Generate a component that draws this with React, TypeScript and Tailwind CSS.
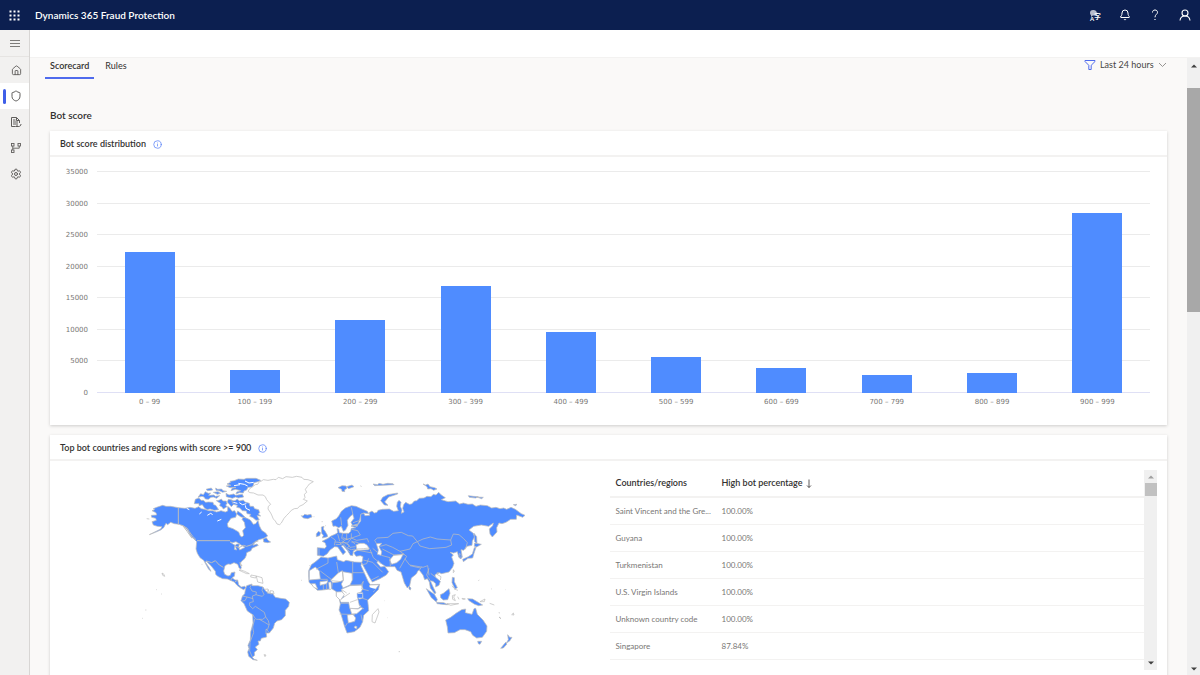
import React, { useState } from 'react';
import { Bell, House, Info, Settings, Shield } from 'lucide-react';

const distribution = [
  { range: '0 – 99', count: 22170 },
  { range: '100 – 199', count: 3560 },
  { range: '200 – 299', count: 11560 },
  { range: '300 – 399', count: 16870 },
  { range: '400 – 499', count: 9660 },
  { range: '500 – 599', count: 5620 },
  { range: '600 – 699', count: 3960 },
  { range: '700 – 799', count: 2850 },
  { range: '800 – 899', count: 3090 },
  { range: '900 – 999', count: 28430 },
];

const ticks = [35000, 30000, 25000, 20000, 15000, 10000, 5000, 0];

const countries = [
  { name: 'Saint Vincent and the Gre...', percentage: '100.00%' },
  { name: 'Guyana', percentage: '100.00%' },
  { name: 'Turkmenistan', percentage: '100.00%' },
  { name: 'U.S. Virgin Islands', percentage: '100.00%' },
  { name: 'Unknown country code', percentage: '100.00%' },
  { name: 'Singapore', percentage: '87.84%' },
  { name: 'Mozambique', percentage: '78.00%' },
];

const WaffleIcon = () => (
  <svg viewBox="0 0 11 11" className="size-[11px]" fill="currentColor">
    {[0, 4, 8].map((y) => [0, 4, 8].map((x) => <rect key={`${x}-${y}`} x={x + 0.5} y={y + 0.5} width="2" height="2" />))}
  </svg>
);

const MenuIcon = () => (
  <svg viewBox="0 0 12 10" className="h-[10px] w-3" fill="none" stroke="currentColor" strokeWidth="0.8">
    <path d="M1 2.500h10M1 5.500h10M1 8.500h10" />
  </svg>
);

const ReportIcon = () => (
  <svg viewBox="0 0 12 12" className="size-3" fill="none" stroke="currentColor" strokeWidth="1">
    <path d="M5.500 10.500H1.500V1.500H6.500L9.500 4.500V7M6.500 1.500V4.500H9.500M3 4h2.500M3 6h5M3 8h5M5.500 10.500h3c1.500 0 2.500-1 2.500-2.500M6.500 9.500l2 1" />
  </svg>
);

const FlowIcon = () => (
  <svg viewBox="0 0 12 12" className="size-3" fill="none" stroke="currentColor" strokeWidth="0.9">
    <rect x="1.500" y="1.500" width="2.500" height="2.500" />
    <rect x="8" y="1.500" width="2.500" height="2.500" />
    <rect x="1.500" y="8" width="2.500" height="2.500" />
    <path d="M2.750 4v4M9.250 4v2.200H2.750" />
  </svg>
);

const FilterIcon = () => (
  <svg viewBox="0 0 12 12" className="size-3" fill="none" stroke="currentColor" strokeWidth="1">
    <path d="M1 1.500h10v1L7.200 6.300V10.500H4.800V6.300L1 2.500z" />
  </svg>
);

const LanguageIcon = () => (
  <svg viewBox="0 0 12 12" className="size-3" fill="currentColor">
    <path d="M4 1a3 3 0 0 0-3 3c0 1 .4 1.700 1 2.200V8l1.800-1.500H8V4.500A3.500 3.500 0 0 0 4 1z" opacity="0.7" />
    <text x="1" y="11.500" fontSize="6" fontWeight="700">A</text>
    <text x="5.300" y="10" fontSize="6.500" fontWeight="700" fontFamily="Noto Sans CJK SC">字</text>
  </svg>
);

const PersonIcon = () => (
  <svg viewBox="0 0 12 12" className="size-3" fill="none" stroke="currentColor" strokeWidth="1.100">
    <circle cx="6" cy="4" r="3" />
    <path d="M1 11.500c.3-2.800 2.500-4.500 5-4.500s4.700 1.700 5 4.500" />
  </svg>
);

const HelpIcon = () => (
  <svg viewBox="0 0 12 12" className="size-3" fill="none" stroke="currentColor" strokeWidth="1">
    <path d="M3.500 3.500C3.500 1.800 4.500 1 6 1s2.500.9 2.500 2.300C8.500 5.300 6 5.500 6 8.300" />
    <path d="M5.400 10.500h1.200" strokeWidth="1.200" />
  </svg>
);

const ChevronIcon = () => (
  <svg viewBox="0 0 9 6" className="h-1.5 w-[9px]" fill="none" stroke="currentColor" strokeWidth="0.900">
    <path d="M1 1l3.500 3.500L8 1" />
  </svg>
);

const SortDownIcon = () => (
  <svg viewBox="0 0 6 9" className="ml-[3px] inline h-[9px] w-1.5" fill="none" stroke="currentColor" strokeWidth="0.800">
    <path d="M3 0.500v8M1 6.500l2 2 2-2" />
  </svg>
);

const Arrow = ({ down = false, className = 'text-[#404040]' }: { down?: boolean; className?: string }) => (
  <svg viewBox="0 0 6 4" className={`h-1 w-1.5 ${className}`} fill="currentColor">
    <path d={down ? 'M0 0.500h6L3 3.500z' : 'M0 3.500h6L3 0.500z'} />
  </svg>
);

const WorldMap = () => (
  <svg viewBox="0 0 1230 600" className="w-[410px]" fill="#4f8cff" stroke="#bdbdbd" strokeWidth="2.200" strokeLinejoin="round" role="img" aria-label="Map of countries with high bot scores">
    {/* North America */}
    <path d="M66 137L74 134 70 131 80 127 98 121 108 124 122 124 145 128 165 130 180 127 195 130 206 125 214 131 224 133 236 137 248 137 260 141 273 137 286 141 293 138 293 124 300 130 306 139 314 137 320 147 317 157 303 160 292 176 294 186 309 191 326 201 331 213 336 216 341 211 338 197 346 188 343 172 336 163 340 156 351 160 361 165 370 178 377 176 384 166 388 182 395 196 407 204 413 213 402 220 386 224 374 233 369 241 381 237 385 241 366 250 363 257 350 263 349 271 345 280 334 290 330 297 334 307 332 313 327 308 323 298 312 293 302 298 294 297 285 302 281 318 284 328 294 333 301 331 304 323 315 321 313 334 306 338 315 345 323 345 326 359 334 366 344 364 348 368 341 374 333 370 321 361 313 351 301 346 292 342 278 341 263 334 257 328 256 319 243 302 229 289 226 291 238 309 243 319 236 313 221 286 210 278 202 265 198 252 200 230 192 222 182 212 172 194 160 183 147 178 133 176 122 172 113 179 108 175 101 188 92 195 76 202 58 209 92 192 96 185 82 184 70 180 66 170 79 166 77 160 65 157 64 151 80 150 78 143z" />
    <path d="M193 116L196 103 207 99 213 106 220 106 227 112 235 111 249 112 251 119 257 121 266 134 253 136 240 132 232 134 224 130 217 119 207 122 207 116z" />
    <path d="M204 97L212 86 220 89 226 80 235 85 242 84 236 91 252 90 256 94 269 92 260 100 250 96 243 97 235 103 226 102 222 96 216 94zM257 69l6 4 12-1 4 5 11 2-12 3-8-4-12-2zM228 73l16-4 4 6-15 2zM259 107l8-1 7-4 5 6 10 0 2 8-4 4 4 5-11 7-4-6-7-4 2-7zM288 85l9 5 14-3 6 4 20-3 4 8-16 3-8-3-10 4-18-5zM295 103l12 2 5 12-8 8-5-6-7-8zM250 82l14-2 8 5-10 3z" />
    <path d="M291 57L302 52 300 49 312 47 325 42 342 43 350 40 378 40 392 46 384 50 372 53 370 61 366 66 354 67 350 75 342 78 340 84 328 83 318 87 320 81 332 77 316 73 303 77 306 70 318 67 300 68 289 63 303 61zM305 107L315 107 322 102 328 108 340 105 345 111 358 115 360 124 370 124 374 131 386 134 389 143 385 147 392 153 381 152 388 164 378 166 369 158 359 154 362 148 351 146 349 138 337 137 329 129 320 127 322 121 310 118zM323 138l10 7 14 13-14-2-13-9zM400 222l9-4 5 8 8 5-9 2-12-2z" />
    <path d="M325 55l18 3 10 5M312 62l18-3M345 48l12 6 14-2M328 113l9 6 12-3M346 121l2 9 12 6M310 112l12 3M170 130l8 4M232 151l10-6 6 4M215 141l-7 6M262 168l12-5" fill="none" stroke="white" strokeWidth="3" />
    <g fill="white">
      <path d="M354 79L360 70 367 66 376 59 383 58 388 50 393 49 400 44 414 46 430 43 438 44 445 37 458 41 468 35 487 37 500 34 516 37 521 43 534 44 550 50 538 57 532 65 526 73 530 82 523 88 525 98 520 103 532 108 519 119 508 124 503 130 493 131 484 136 478 143 470 151 462 160 454 174 449 179 441 177 436 168 430 162 425 150 422 144 414 132 415 124 422 118 415 110 410 104 406 95 399 90 384 90 371 84 360 83z" />
      <path d="M300 231l8 2 10-3 11 7-9 0-4 4-6-3zM315 241l5 14-7-2zM328 237l17 10-16 8-3-9zM330 292l6 11-4-3z" />
      <path d="M327 315l8 1 9 3 14 7-8 0-9-4-7-3zM363 330l16 3-2 6-15-3zM379 333l17 5 3 17-16-4zM350 368l2-4 1 7zM404 373l10-1 4 11-10 3-6-7zM421 377l9 1 2 9-11-1zM96 324l6 4 2 6-6-3zM402 569l6 1-3 5z" />
    </g>
    <path d="M145 128V178M201 227H300M229 288L245 293 256 287 268 300 280 307M318 244L327 248 340 241 350 244 365 239 377 229 385 228M155 180L165 186 172 190 178 200 187 213 198 224M160 184l12 16 14 20M307 338L301 347M323 346L315 350" fill="none" strokeWidth="3" />
    <path d="M514 152L519 153 524 148 532 150 543 148 546 156 533 161 520 159z" />
    {/* South America */}
    <path d="M346 374L350 362 366 357 366 362 384 362 399 366 405 376 415 385 428 386 436 397 452 400 467 402 478 412 476 424 466 436 466 452 455 464 441 468 434 475 430 489 418 504 409 504 410 516 394 520 391 528 384 528 387 538 376 546 382 554 373 562 374 571 367 577 373 583 382 586 369 584 356 574 353 561 357 551 354 541 361 525 362 501 369 474 368 449 352 438 342 416 333 407 337 394 344 386z" />
    <path d="M365 358L360 367 366 378 379 381 378 389 367 393 370 410 359 413 359 422 368 431 376 424 388 432 403 442 407 456 398 463 380 463 376 461 368 448M399 366L396 376 402 388 397 394 384 391 378 389M337 393L351 396 369 401M351 396L345 407 336 408M374 462L368 486 371 503 360 532 359 558 367 576M388 463L404 472 417 480 413 493 408 493 408 507M414 374L412 386M428 384L422 389M408 492L419 504M407 456L415 467 418 480" fill="none" />
    <g transform="translate(510 0)">
      {/* Arctic islands and Britain */}
      <path d="M114 68l12-6 12 1 3 7-7 4 0 6-8-1-1-6zM140 65l16-5 6 5-16 6zM369 57l8 3 7-3 6 8 14 3 7 4-10 4-8-5-10 1-2-7zM505 92l15 2 15 1-8 4-19-2zM530 96l20 1-5 4zM219 57l14 2 4-4 12 3 14-3 16 1 3 3-58 3zM640 119l11-1-4 4zM182 63l2 1z" />
      <path d="M64 186L72 184 70 192 75 198 82 210 83 215 67 219 70 211 65 205zM49 207L55 199 62 203 59 212 49 215zM242 107L248 97 263 89 293 84 293 87 266 96 254 111 264 121 253 120z" />
      {/* Scandinavia */}
      <path d="M95 168L109 161 116 153 124 139 136 129 154 122 168 124 181 130 202 139 206 146 191 144 183 148 179 164 175 176 158 182 153 172 162 160 158 148 149 156 142 166 144 181 136 196 130 199 124 184 116 188 106 183 99 184z" />
      {/* Eurasia mainland */}
      <path d="M52 248L75 250 79 244 75 233 66 229 84 220 93 213 105 208 113 203 111 191 116 192 118 203 131 205 146 205 152 199 154 190 167 188 153 183 175 178 182 168 182 148 191 145 195 152 209 151 207 143 216 138 223 144 231 142 234 136 247 133 268 132 281 139 295 137 290 124 292 112 297 106 303 112 301 124 306 135 304 145 312 141 308 130 311 119 317 112 328 118 335 117 343 108 350 107 358 100 372 99 381 94 393 95 400 88 408 90 416 82 424 90 436 98 424 104 444 110 467 108 479 117 490 114 504 118 517 117 528 124 541 120 562 122 575 129 588 127 600 131 611 129 620 133 633 127 646 133 664 146 675 151 668 157 650 150 649 163 632 163 618 172 606 176 597 174 590 188 591 201 577 216 570 207 568 192 578 182 580 174 566 184 544 180 521 184 507 195 520 205 524 215 517 228 516 241 501 244 491 256 483 254 487 276 482 282 476 276 472 260 461 264 450 262 460 270 455 276 462 295 458 307 447 321 425 326 417 323 405 329 406 336 421 349 417 361 407 366 407 356 399 349 391 347 398 363 408 384 404 386 391 369 388 351 382 341 374 344 369 330 358 316 354 317 349 327 334 339 329 362 322 369 313 354 303 321 291 316 285 305 258 305 244 296 234 287 231 293 242 306 254 304 266 320 259 330 240 341 217 351 209 338 188 299 185 292 187 288 189 275 181 272 168 274 161 263 172 256 205 254 208 250 189 239 181 238 175 250 167 254 160 258 158 272 151 271 143 257 129 241 124 243 137 261 129 269 113 246 104 245 90 255 81 267 70 274 52 271z" />
      {/* seas */}
      <path d="M168 240L179 235 192 235 201 240 207 249 190 251 170 252zM229 236L245 235 237 245 245 260 243 271 232 268 235 255zM161 181L174 182 169 184z" fill="white" />
      {/* Africa */}
      <path d="M63 276L84 279 110 273 112 284 131 290 138 286 164 291 185 292 183 302 205 350 211 359 239 358 235 374 216 393 203 406 205 424 206 437 191 451 188 470 180 487 163 500 141 504 133 482 123 448 117 435 121 417 118 403 109 393 109 380 95 371 69 375 52 376 37 361 27 352 26 333 26 317 34 299 48 289z" />
      <g fill="white">
        <path d="M28 317L46 306 58 318 61 342 28 345zM92 345L116 323 127 317 130 346 116 351 98 353zM128 320L156 325 157 345 150 360 129 369 124 357 130 346zM34 356L46 356 53 372 41 367zM60 350L84 347 80 356 60 361zM86 352l7-1 1 21-6 2z" />
        <path d="M124 373L150 362 184 360 189 370 183 381 172 386 174 404 178 421 183 423 174 431 149 430 146 412 123 412 119 405 132 396z" />
        <path d="M109 381L126 380 133 389 121 406 109 394zM150 430L174 432 183 427 188 431 170 446 155 447zM142 450L159 448 167 459 164 469 145 474zM165 483l6 2-2 6-6-3zM172 384l16-1 1 16-10 3-7-5zM209 360l28-1-16 21-14-4z" />
        <path d="M217 449L234 431 237 441 225 474 216 470z" />
      </g>
      <path d="M172 386h15v12h-14zM196 362l22 8 10 2-14 14-14-6z" stroke="none" />
      <path d="M84 279V294L48 313M61 318L95 344 115 323 110 291M158 291V344M158 323H193M150 360L183 360 190 349M97 353L95 371M61 343H83M70 358V375M80 354V374M95 347L124 350M122 415H146M119 447L165 449M135 485L142 474M188 400L203 405M177 421L192 432M190 349L185 372 206 377M183 449L187 468M124 373L140 384M150 412L172 404M132 396L150 384" fill="none" />
      {/* Central and south Asia */}
      <path d="M269 285L281 271 298 269 310 266 302 283 290 293 275 298z" fill="white" />
      <path d="M229 235L224 226 232 219 264 217 279 205 304 202 325 212 338 213 352 230 339 236 330 252 300 259 278 247 258 239 241 244M352 230L369 222 391 216 411 222 452 225 455 240 438 247 389 251 360 243zM452 225L460 207 477 209 491 221 502 233 496 253M244 271L270 278 271 305M247 252L282 270 313 269M300 259L320 274 315 282 329 300 369 307 383 302 387 331M316 280L299 310M330 302L361 309M190 285L218 292 248 322M210 253L220 278 242 296M218 250L231 261M365 305L358 316M387 310L380 330 390 346M392 325L406 336M188 299L200 296 206 280M214 345L236 334" fill="none" />
      {/* Europe borders */}
      <path d="M57 250V273M93 216L106 225 103 241M128 204L125 220 134 225 124 238 107 239M154 205L154 219 134 225M105 231L143 234 155 219 181 210 173 197 155 193M154 219L170 226 202 221 206 232M142 235L150 247 166 245M155 228L166 238M125 227L148 242 142 249 154 254 165 252M122 157L125 181M154 127L159 150M164 254L217 264M159 173L180 166M113 207L119 228M128 218L145 224M140 205V225M154 231H168L179 236M130 236L138 247 150 262M118 232L124 238" fill="none" />
      {/* Southeast Asia and Pacific */}
      <path d="M379 371L387 377 403 388 412 403 409 411 394 398zM421 389L430 385 447 371 450 385 443 404 430 405 422 398zM410 412L431 413 445 419 438 419 411 416zM457 337L463 338 463 350 472 368 465 372 456 353zM479 265L484 270 482 281 477 276zM523 248L528 247 522 265 518 279 504 280 490 290 488 283 505 275 517 267zM524 234L544 238 530 246 523 244zM522 205L530 215 531 236 524 230zM503 401L518 402 548 420 536 422 524 418 507 407zM327 363l6 6-2 6-4-3z" />
      <path d="M437 465L452 457 468 445 485 434 497 432 496 443 516 448 522 431 527 430 532 448 549 465 561 483 560 499 547 517 530 519 518 511 512 500 495 494 480 494 463 503 444 504 442 486z" />
      <path d="M533 529L545 529 540 538 535 536zM623 509L629 517 636 517 629 528 619 534 625 524zM617 532L621 537 610 549 602 550z" />
      <path d="M457 392L466 389 461 396 466 407 458 403zM486 400l10 2-8 1zM441 416l35 0-24 5zM540 410l15-8-2 8zM569 415l14 5M596 443l4 1M635 449l5-5 2 6zM597 456l6 5zM573 371l2 1M535 347l3-2M460 314l3 5-3 4zM411 323l5 1-4 4zM421 345l2-10-12-7M253 407h1M261 458h1M296 560h4M615 374h1M462 372l12 4M456 362l6 8M473 395l4 8" fill="none" />
    </g>
    <path d="M78 374h2M94 387h2M46 435h3M37 460h2M215 298h2M514 346h2M537 302h2M58 162l-8-1M575 170h3M585 182h2M551 155h2" fill="none" />
  </svg>
);

const PageScrollbar = () => (
  <div aria-hidden="true" className="flex w-[13px] shrink-0 flex-col items-center bg-[#f0f0f0] pt-[6px] pb-1">
    <Arrow />
    <div className="mt-5 h-56 w-full bg-[#a8a8a8]" />
    <div className="flex-1" />
    <Arrow down />
  </div>
);

const CardTitle = ({ children }: { children: React.ReactNode }) => (
  <div className="flex h-[26px] items-center gap-[7px] border-b-2 border-[#f3f2f1] px-[10px] pt-[2px]">
    <h3 className="text-[9px] leading-3 font-semibold text-[#323130]">{children}</h3>
    <button type="button" aria-label="More information" className="text-[#5b83f7]">
      <Info className="size-[9px]" strokeWidth={2} />
    </button>
  </div>
);

const navItems = [
  { label: 'Home', icon: <House className="size-[11px]" strokeWidth={2} /> },
  { label: 'Protection', icon: <Shield className="size-3" strokeWidth={2} />, active: true },
  { label: 'Reports', icon: <ReportIcon /> },
  { label: 'Data flow', icon: <FlowIcon /> },
  { label: 'Settings', icon: <Settings className="size-3" strokeWidth={2} /> },
];

const App: React.FC = () => {
  const [tab, setTab] = useState('Scorecard');

  return (
    <div className="flex h-screen flex-col overflow-hidden bg-[#faf9f8] font-[Lato,'Noto_Sans',sans-serif] text-[#323130]">
      <header className="flex h-[30px] shrink-0 items-center bg-[#0c1f50] pr-[9px] pl-[9px] text-white">
        <button type="button" aria-label="App launcher"><WaffleIcon /></button>
        <h1 className="ml-[15px] text-[10px] leading-4 font-semibold">Dynamics 365 Fraud Protection</h1>
        <div className="ml-auto flex items-center gap-[18px]">
          <button type="button" aria-label="Language"><LanguageIcon /></button>
          <button type="button" aria-label="Notifications"><Bell className="size-3" strokeWidth={2} /></button>
          <button type="button" aria-label="Help"><HelpIcon /></button>
          <button type="button" aria-label="Account"><PersonIcon /></button>
        </div>
      </header>

      <div className="flex min-h-0 flex-1">
        <nav className="w-[30px] shrink-0 border-r border-[#d8d6d4] bg-[#f2f1f0] text-[#605e5c]">
          <button type="button" aria-label="Expand navigation" className="flex h-[27px] w-full items-center justify-center border-b border-[#e6e4e2]">
            <MenuIcon />
          </button>
          {navItems.map((item) => (
            <a
              key={item.label}
              href="#"
              aria-label={item.label}
              className={item.active ? 'flex h-[26px] items-center bg-white pl-[3px]' : 'flex h-[26px] items-center pl-[3px]'}
            >
              <span className={item.active ? 'h-[15px] w-[3px] rounded-full bg-[#3f5fe8]' : 'w-[3px]'} />
              <span className="flex flex-1 justify-center pr-[3px]">{item.icon}</span>
            </a>
          ))}
        </nav>

        <div className="flex min-w-0 flex-1 flex-col">
          <div className="h-[27px] shrink-0 bg-white" />
          <div className="flex min-h-0 flex-1 border-t border-[#f3f2f1]">
            <main className="min-w-0 flex-1 overflow-hidden px-5">
              <div className="-ml-[5px] flex h-[21px] items-start justify-between">
                <div role="tablist" className="flex h-full gap-[2px]">
                  {['Scorecard', 'Rules'].map((name) => (
                    <button
                      key={name}
                      type="button"
                      role="tab"
                      aria-selected={tab === name}
                      onClick={() => setTab(name)}
                      className={
                        tab === name
                          ? 'flex items-start border-b-2 border-[#4f6bed] px-[5px] pt-[2px] text-[9px] leading-3 font-semibold'
                          : 'flex items-start border-b-2 border-transparent px-[9px] pt-[2px] text-[9px] leading-3'
                      }
                    >
                      {name}
                    </button>
                  ))}
                </div>
                <div className="flex h-[14px] items-center text-[#4f6bed]">
                  <FilterIcon />
                  <select aria-label="Time range" className="ml-1 appearance-none bg-transparent text-[9px] leading-3 text-[#484644]">
                    <option>Last 24 hours</option>
                    <option>Last 7 days</option>
                  </select>
                  <span className="ml-1 text-[#8a8886]"><ChevronIcon /></span>
                </div>
              </div>

              <h2 className="mt-7 mb-2 text-[10px] leading-4 font-semibold">Bot score</h2>

              <section className="bg-white pb-[18px] shadow-[0_1px_3px_rgba(0,0,0,0.18)]">
                <CardTitle>Bot score distribution</CardTitle>
                <div className="flex pt-[10px] pr-[17px] font-['DejaVu_Sans',sans-serif] text-[7px] leading-[10px] text-[#797775]">
                  <div className="flex h-[231px] w-[38px] flex-col items-end justify-between">
                    {ticks.map((tick) => <span key={tick}>{tick}</span>)}
                  </div>
                  <div className="ml-[9px] min-w-0 flex-1">
                    <div className="grid h-[226px] pt-1">
                      <div className="flex flex-col justify-between [grid-area:1/1]">
                        {ticks.map((tick) => (
                          <div key={tick} className={tick ? 'h-px bg-[#ebebeb]' : 'h-px bg-[#dfe0f5]'} />
                        ))}
                      </div>
                      <div className="grid grid-cols-10 items-end justify-items-center [grid-area:1/1]">
                        {distribution.map((bar) => (
                          <div key={bar.range} className="w-[50px] bg-[#4f8cff]" style={{ height: `${(bar.count / 35000) * 100}%` }} />
                        ))}
                      </div>
                    </div>
                    <div className="mt-1 grid grid-cols-10 text-center">
                      {distribution.map((bar) => <span key={bar.range}>{bar.range}</span>)}
                    </div>
                  </div>
                </div>
              </section>

              <section className="mt-[10px] bg-white pb-5 shadow-[0_1px_3px_rgba(0,0,0,0.18)]">
                <CardTitle>Top bot countries and regions with score &gt;= 900</CardTitle>
                <div className="grid grid-cols-2 pr-[10px]">
                  <div className="flex items-start justify-center pt-1 pl-4">
                    <WorldMap />
                  </div>
                  <div className="mt-[9px] ml-[6px] flex h-[200px] overflow-hidden">
                    <div className="min-w-0 flex-1 overflow-hidden">
                      <table className="w-full table-fixed text-left text-[8px] leading-3">
                        <thead>
                          <tr className="h-[27px] border-b-2 border-[#f3f2f1] text-[9px]">
                            <th scope="col" className="w-[106px] pl-[6px] font-semibold">Countries/regions</th>
                            <th scope="col" className="pl-[6px] font-semibold">High bot percentage<SortDownIcon /></th>
                          </tr>
                        </thead>
                        <tbody className="text-[#797775]">
                          {countries.map((country) => (
                            <tr key={country.name} className="h-[27px] border-b border-[#f3f2f1]">
                              <td className="pl-[6px] whitespace-nowrap">{country.name}</td>
                              <td className="pl-[6px]">{country.percentage}</td>
                            </tr>
                          ))}
                        </tbody>
                      </table>
                    </div>
                    <div aria-hidden="true" className="flex w-[13px] shrink-0 flex-col items-center bg-[#f0f0f0] py-[5px]">
                      <Arrow className="text-[#a0a0a0]" />
                      <div className="mt-1 h-[13px] w-3 bg-[#c1c1c1]" />
                      <div className="flex-1" />
                      <Arrow down />
                    </div>
                  </div>
                </div>
              </section>
            </main>
            <PageScrollbar />
          </div>
        </div>
      </div>
    </div>
  );
};

export default App;
